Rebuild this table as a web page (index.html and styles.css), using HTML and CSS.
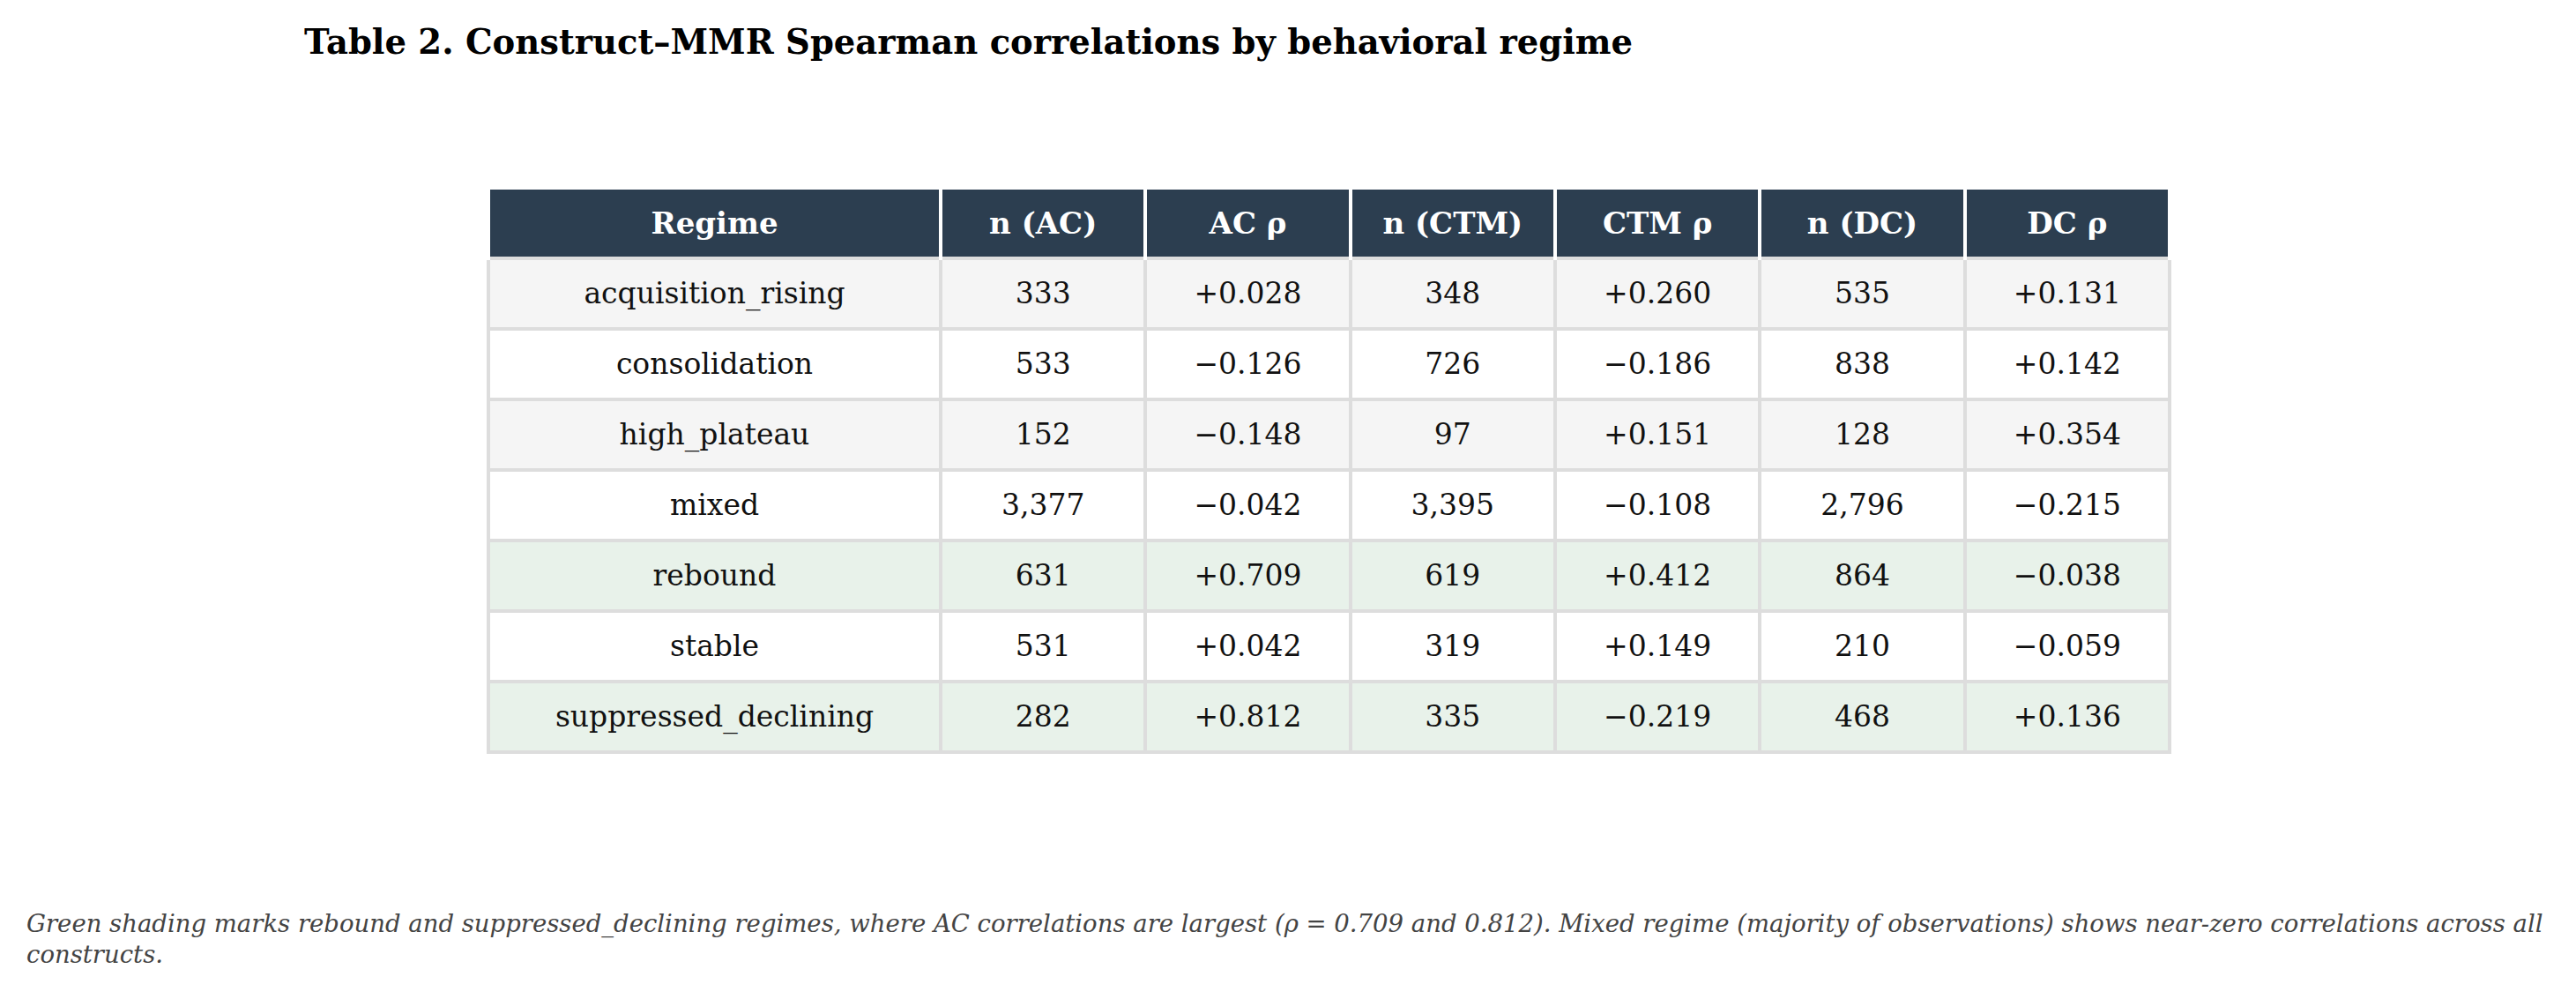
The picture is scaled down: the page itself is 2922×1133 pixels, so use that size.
FILE: index.html
```html
<!DOCTYPE html>
<html lang="en">
<head>
<meta charset="utf-8">
<title>Table 2</title>
<link rel="stylesheet" href="styles.css">
</head>
<body>
<h1 class="title">Table 2. Construct–MMR Spearman correlations by behavioral regime</h1>
<div class="table-wrap">
  <table class="corr">
    <colgroup>
      <col class="col-regime">
      <col><col><col><col><col><col>
    </colgroup>
    <thead>
      <tr>
        <th>Regime</th>
        <th>n (AC)</th>
        <th>AC ρ</th>
        <th>n (CTM)</th>
        <th>CTM ρ</th>
        <th>n (DC)</th>
        <th>DC ρ</th>
      </tr>
    </thead>
    <tbody>
      <tr>
        <td>acquisition_rising</td><td>333</td><td>+0.028</td><td>348</td><td>+0.260</td><td>535</td><td>+0.131</td>
      </tr>
      <tr>
        <td>consolidation</td><td>533</td><td>−0.126</td><td>726</td><td>−0.186</td><td>838</td><td>+0.142</td>
      </tr>
      <tr>
        <td>high_plateau</td><td>152</td><td>−0.148</td><td>97</td><td>+0.151</td><td>128</td><td>+0.354</td>
      </tr>
      <tr>
        <td>mixed</td><td>3,377</td><td>−0.042</td><td>3,395</td><td>−0.108</td><td>2,796</td><td>−0.215</td>
      </tr>
      <tr class="highlight">
        <td>rebound</td><td>631</td><td>+0.709</td><td>619</td><td>+0.412</td><td>864</td><td>−0.038</td>
      </tr>
      <tr>
        <td>stable</td><td>531</td><td>+0.042</td><td>319</td><td>+0.149</td><td>210</td><td>−0.059</td>
      </tr>
      <tr class="highlight">
        <td>suppressed_declining</td><td>282</td><td>+0.812</td><td>335</td><td>−0.219</td><td>468</td><td>+0.136</td>
      </tr>
    </tbody>
  </table>
</div>
<p class="caption">Green shading marks rebound and suppressed_declining regimes, where AC correlations are largest (ρ = 0.709 and 0.812). Mixed regime (majority of observations) shows near-zero correlations across all constructs.</p>
</body>
</html>
```

FILE: styles.css
```css
html, body {
  margin: 0;
  padding: 0;
  background: #ffffff;
}

body {
  font-family: "DejaVu Serif", "Liberation Serif", serif;
  color: #111111;
}

.title {
  margin: 0;
  padding: 24px 0 0 345px;
  font-size: 38.5px;
  line-height: 48px;
  font-weight: 700;
  color: #000000;
}

.table-wrap {
  padding: 139px 0 0 552px;
}

.corr {
  width: 1911px;
  border-collapse: collapse;
  table-layout: fixed;
}

.col-regime {
  width: 513px;
}

.corr th {
  background: #2c3e50;
  color: #ffffff;
  font-weight: 700;
  font-size: 34px;
  line-height: 76px;
  padding: 0;
  text-align: center;
  border: 4px solid #ffffff;
  border-bottom: none;
}

.corr td {
  font-size: 33px;
  line-height: 76px;
  padding: 0;
  text-align: center;
  border: 4px solid #dddddd;
  color: #111111;
  background: #ffffff;
}

.corr tbody tr:nth-child(odd) td {
  background: #f5f5f5;
}

.corr tbody tr.highlight td {
  background: #e8f2ea;
}

.caption {
  margin: 175px 0 0 30px;
  width: 2862px;
  font-size: 27.5px;
  line-height: 35px;
  font-style: italic;
  color: #444444;
}
```
